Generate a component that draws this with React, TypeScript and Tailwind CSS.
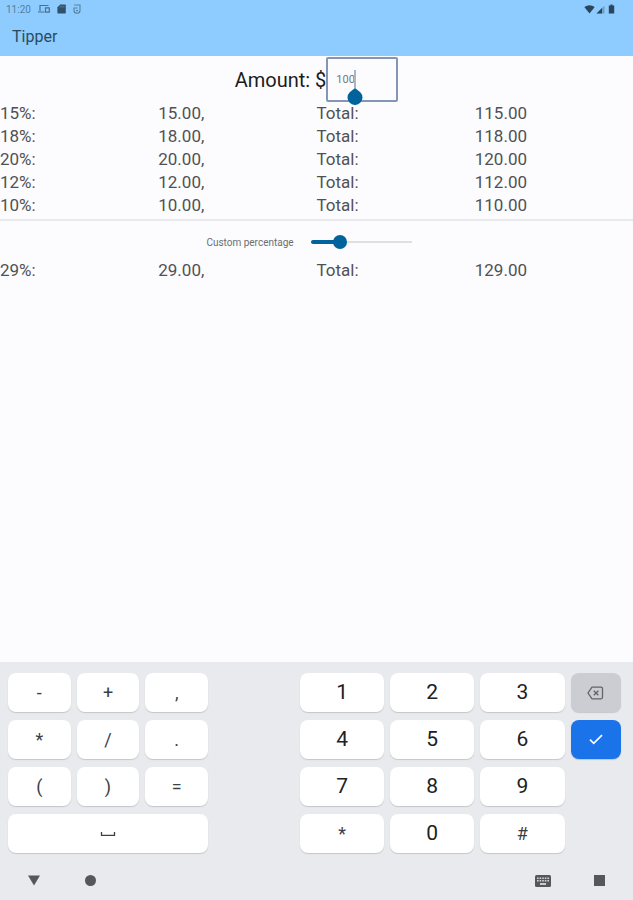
import React, { useState } from 'react';

const TIP_RATES = [15, 18, 20, 12, 10];

const SYMBOL_KEYS = ['-', '+', ',', '*', '/', '.', '(', ')', '='];

interface TipTableProps {
  rates: number[];
  amount: number;
  label: string;
}

const TipTable: React.FC<TipTableProps> = ({ rates, amount, label }) => (
  <table aria-label={label} className="w-full table-fixed border-collapse text-[17px] leading-[23px] text-[#505154]">
    <tbody>
      {rates.map((rate) => (
        <tr key={rate}>
          <td className="w-1/4 p-0">{rate}%:</td>
          <td className="w-1/4 p-0">{((amount * rate) / 100).toFixed(2)},</td>
          <td className="w-1/4 p-0">Total:</td>
          <td className="w-1/4 p-0">{(amount * (1 + rate / 100)).toFixed(2)}</td>
        </tr>
      ))}
    </tbody>
  </table>
);

interface KeyProps {
  label: string;
  onPress: (label: string) => void;
  className?: string;
  children?: React.ReactNode;
}

const Key: React.FC<KeyProps> = ({ label, onPress, className = 'bg-white text-[#202124]', children }) => (
  <button
    type="button"
    aria-label={label}
    onClick={() => onPress(label)}
    className={`flex h-[39px] items-center justify-center rounded-lg shadow-[0_1px_1px_#c4c6ca] ${className}`}
  >
    {children ?? label}
  </button>
);

const StatusBar = () => (
  <div className="flex h-[18px] items-center justify-between pl-[6px] pr-4 text-[10px] text-[#54809f]">
    <div className="flex items-center gap-[7px]">
      <span>11:20</span>
      <svg width="12" height="10" viewBox="0 0 12 10" fill="none" stroke="#48718f" strokeWidth="1.2">
        <path d="M10.5 1.5H2V7M0 8h6.5" />
        <path d="M7.5 3.8h3.8v4.4H7.5z" />
      </svg>
      <svg width="9" height="10" viewBox="0 0 9 10" fill="#31516a">
        <path d="M3.2.5H8q.8 0 .8.8v7.4q0 .8-.8.8H1.2q-.8 0-.8-.8V3.3z" />
        <path d="M3.3 1.8v1.7M5.1 1.8v1.7M6.9 1.8v1.7" stroke="#7296b3" strokeWidth=".7" />
      </svg>
      <svg width="8" height="10" viewBox="0 0 8 10" fill="none" stroke="#54809f" strokeWidth="1.1">
        <path d="M1 1h6v5.6Q7 9.3 4 9.3T1 6.6V4h3.6M3 6.6h2" />
      </svg>
    </div>
    <div className="flex items-center gap-px">
      <svg width="11" height="9" viewBox="0 0 11 9" fill="#29465c">
        <path d="M5.5 8.5L.3 2Q5.5-1.4 10.7 2z" />
      </svg>
      <svg width="9" height="9" viewBox="0 0 9 9">
        <path d="M8.5.5v8h-8z" fill="#6f9fc3" />
        <path d="M6 3v5.500H.5z" fill="#29465c" />
      </svg>
      <svg width="11" height="10" viewBox="0 0 11 10" fill="#29465c">
        <path d="M4.500.5h2v1h1.700v8H2.800v-8h1.700z" />
      </svg>
    </div>
  </div>
);

export default function App() {
  const [amount, setAmount] = useState('100');
  const [percent, setPercent] = useState(29);
  const value = Number(amount) || 0;

  const press = (key: string) => setAmount((prev) => prev + key);
  const erase = () => setAmount((prev) => prev.slice(0, -1));
  const done = () => setAmount((prev) => prev.trim());

  return (
    <div className="flex min-h-screen flex-col bg-[#fcfcff] font-[Roboto,sans-serif]">
      <header className="bg-[#8eccff]">
        <StatusBar />
        <h1 className="px-3 py-[7px] text-base leading-6 text-[#2a4a62]">Tipper</h1>
      </header>

      <main className="flex-1">
        <div className="flex items-center justify-center pt-px">
          <label htmlFor="amount" className="text-xl text-[#1a1c1e]">Amount: $</label>
          <div className="relative">
            <input
              id="amount"
              inputMode="decimal"
              value={amount}
              onChange={(e) => setAmount(e.target.value)}
              className="block h-[45px] w-[72px] rounded-xs border-2 border-[#8496b8] bg-transparent px-2 text-[11px] text-[#74777b] caret-transparent outline-none"
            />
            {/* text cursor with its drag handle */}
            <div
              className="pointer-events-none absolute top-[13px] flex w-4 flex-col items-center"
              style={{ left: 3 + amount.length * 6 }}
            >
              <span className="h-[18px] w-[2px] bg-[#a5b8cb]" />
              <svg width="16" height="17" viewBox="0 0 16 17" fill="#00639b">
                <path d="M8 0l5.300 4.200a7.500 7.500 0 1 1-10.600 0z" />
              </svg>
            </div>
          </div>
        </div>

        <TipTable label="Tips" rates={TIP_RATES} amount={value} />

        <hr className="mt-[2px] border-t-2 border-[#e9eaed]" />

        <div className="flex h-[38px] items-center justify-center gap-[10px] pt-1 pr-2">
          <label htmlFor="percent" className="text-[10px] text-[#6b6d70]">Custom percentage</label>
          <div className="relative flex h-4 w-[115px] items-center px-[7px]">
            <div className="h-[2px] flex-1 bg-[#dcdfe4]">
              <div className="-mt-px h-1 rounded-l-sm bg-[#00639b]" style={{ width: `${percent}%` }} />
            </div>
            <input
              id="percent"
              type="range"
              min={0}
              max={100}
              value={percent}
              onChange={(e) => setPercent(Number(e.target.value))}
              className="absolute inset-0 w-full appearance-none bg-transparent [&::-webkit-slider-thumb]:size-[14px] [&::-webkit-slider-thumb]:appearance-none [&::-webkit-slider-thumb]:rounded-full [&::-webkit-slider-thumb]:bg-[#00639b]"
            />
          </div>
        </div>

        <TipTable label="Custom tip" rates={[percent]} amount={value} />
      </main>

      <section aria-label="Keyboard" className="bg-[#e8eaed]">
        <div className="grid grid-cols-[200fr_321fr] gap-x-[92px] pt-[11px] pr-3 pl-2">
          <div className="grid grid-cols-3 gap-x-[6px] gap-y-2 text-lg">
            {SYMBOL_KEYS.map((key) => (
              <Key key={key} label={key} onPress={press} className="bg-white text-[#3c4043]" />
            ))}
            <Key label="Space" onPress={() => press(' ')} className="col-span-3 bg-white">
              <svg width="16" height="6" viewBox="0 0 16 6" fill="none" stroke="#3c4043" strokeWidth="1.3">
                <path d="M1.500 1v3.300h13V1" />
              </svg>
            </Key>
          </div>

          <div className="grid grid-cols-[5fr_5fr_5fr_3fr] gap-x-[6px] gap-y-2 text-[21px]">
            <Key label="1" onPress={press} />
            <Key label="2" onPress={press} />
            <Key label="3" onPress={press} />
            <Key label="Delete" onPress={erase} className="bg-[#cccdd2]">
              <svg width="17" height="14" viewBox="0 0 17 14" fill="none" stroke="#62646a" strokeWidth="1.3">
                <path d="M5 1.200h9q1.500 0 1.500 1.500v8.600q0 1.500-1.500 1.500H5L1 7zM6.800 4.700l4.600 4.600M11.400 4.700L6.800 9.300" />
              </svg>
            </Key>
            <Key label="4" onPress={press} />
            <Key label="5" onPress={press} />
            <Key label="6" onPress={press} />
            <Key label="Done" onPress={done} className="bg-[#1a73e8]">
              <svg width="14" height="11" viewBox="0 0 14 11" fill="none" stroke="#fff" strokeWidth="1.700">
                <path d="M1 5.700l3.700 3.700L13 1.200" />
              </svg>
            </Key>
            <Key label="7" onPress={press} />
            <Key label="8" onPress={press} />
            <Key label="9" onPress={press} />
            <span />
            <Key label="*" onPress={press} className="bg-white text-lg text-[#3c4043]" />
            <Key label="0" onPress={press} />
            <Key label="#" onPress={press} className="bg-white text-lg text-[#3c4043]" />
          </div>
        </div>

        <nav className="flex h-[47px] items-center justify-between px-[26px] pt-[8px]">
          <div className="flex gap-10">
            <button type="button" aria-label="Hide keyboard" className="flex size-4 items-center justify-center">
              <svg width="12" height="11" viewBox="0 0 12 11" fill="#55575a">
                <path d="M0 .5h12L6 10.500z" />
              </svg>
            </button>
            <button type="button" aria-label="Home" className="flex size-4 items-center justify-center">
              <span className="size-[11px] rounded-full bg-[#55575a]" />
            </button>
          </div>
          <div className="flex gap-10">
            <button type="button" aria-label="Switch keyboard" className="flex size-4 items-center justify-center">
              <svg width="16" height="12" viewBox="0 0 16 12" className="shrink-0">
                <rect width="16" height="12" rx="1.500" fill="#55575a" />
                <path d="M2 3.200h12M2 5.800h12" stroke="#d5d7da" strokeWidth="1.400" strokeDasharray="1.600 1" />
                <path d="M5 9h6" stroke="#f1f2f4" strokeWidth="1.500" />
              </svg>
            </button>
            <button type="button" aria-label="Recent apps" className="flex size-4 items-center justify-center">
              <span className="size-[11px] bg-[#55575a]" />
            </button>
          </div>
        </nav>
      </section>
    </div>
  );
}
